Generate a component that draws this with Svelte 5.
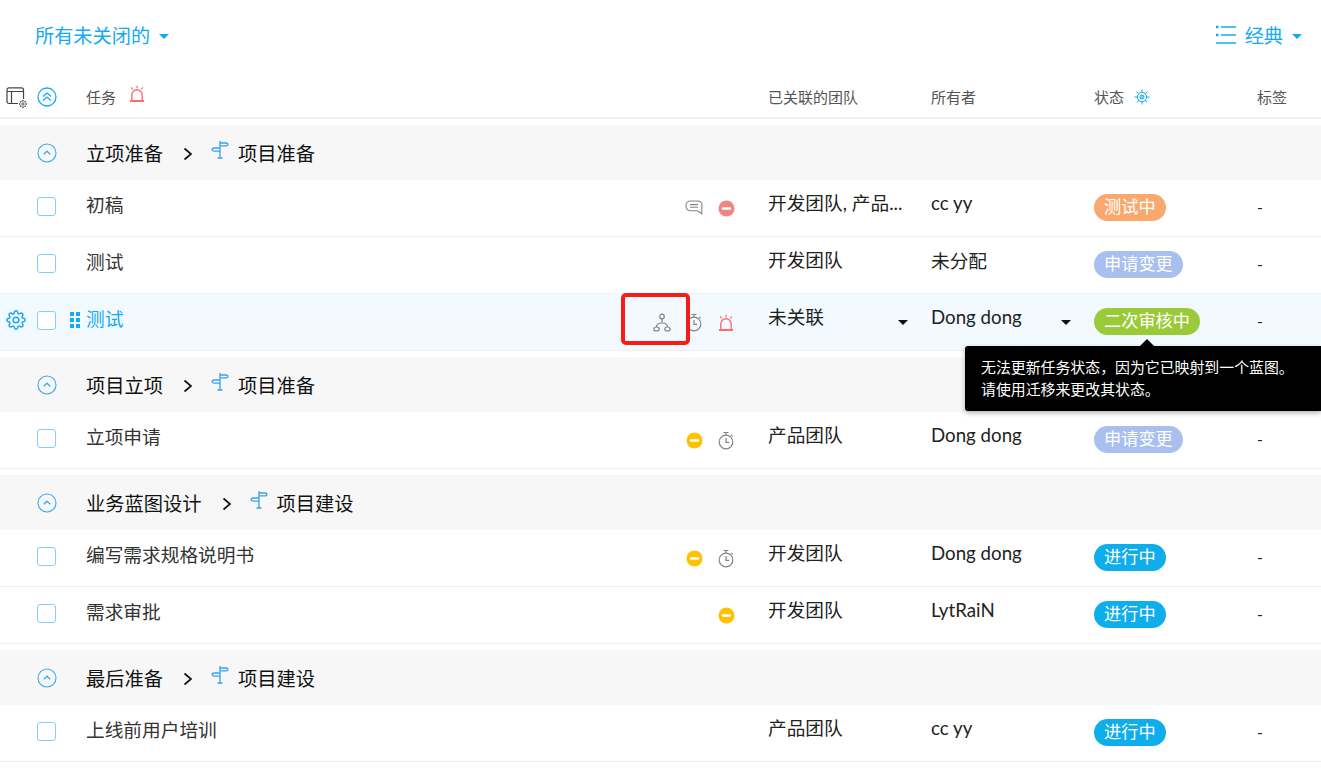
<script lang="ts">
  type Row = {
    name: string;
    team: string;
    owner: string;
    status: string;
    tone: string;
    icons: string[];
    active?: boolean;
  };
  type Group = { name: string; stage: string; rows: Row[] };

  const groups: Group[] = [
    {
      name: '立项准备',
      stage: '项目准备',
      rows: [
        { name: '初稿', team: '开发团队, 产品...', owner: 'cc yy', status: '测试中', tone: 'orange', icons: ['comment', 'blocked'] },
        { name: '测试', team: '开发团队', owner: '未分配', status: '申请变更', tone: 'lilac', icons: [] },
        { name: '测试', team: '未关联', owner: 'Dong dong', status: '二次审核中', tone: 'green', icons: ['network', 'timer', 'alarm'], active: true },
      ],
    },
    {
      name: '项目立项',
      stage: '项目准备',
      rows: [{ name: '立项申请', team: '产品团队', owner: 'Dong dong', status: '申请变更', tone: 'lilac', icons: ['pending', 'timer'] }],
    },
    {
      name: '业务蓝图设计',
      stage: '项目建设',
      rows: [
        { name: '编写需求规格说明书', team: '开发团队', owner: 'Dong dong', status: '进行中', tone: 'blue', icons: ['pending', 'timer'] },
        { name: '需求审批', team: '开发团队', owner: 'LytRaiN', status: '进行中', tone: 'blue', icons: ['pending'] },
      ],
    },
    {
      name: '最后准备',
      stage: '项目建设',
      rows: [{ name: '上线前用户培训', team: '产品团队', owner: 'cc yy', status: '进行中', tone: 'blue', icons: [] }],
    },
  ];

  const gearPath =
    'M19.4 15a1.65 1.65 0 0 0 .33 1.82l.06.06a2 2 0 0 1 0 2.83 2 2 0 0 1-2.83 0l-.06-.06a1.65 1.65 0 0 0-1.82-.33 1.65 1.65 0 0 0-1 1.51V21a2 2 0 0 1-2 2 2 2 0 0 1-2-2v-.09A1.65 1.65 0 0 0 9 19.4a1.65 1.65 0 0 0-1.82.33l-.06.06a2 2 0 0 1-2.83 0 2 2 0 0 1 0-2.83l.06-.06a1.65 1.65 0 0 0 .33-1.82 1.65 1.65 0 0 0-1.51-1H3a2 2 0 0 1-2-2 2 2 0 0 1 2-2h.09A1.65 1.65 0 0 0 4.6 9a1.65 1.65 0 0 0-.33-1.82l-.06-.06a2 2 0 0 1 0-2.83 2 2 0 0 1 2.83 0l.06.06a1.65 1.65 0 0 0 1.82.33H9a1.65 1.65 0 0 0 1-1.51V3a2 2 0 0 1 2-2 2 2 0 0 1 2 2v.09a1.65 1.65 0 0 0 1 1.51 1.65 1.65 0 0 0 1.82-.33l.06-.06a2 2 0 0 1 2.83 0 2 2 0 0 1 0 2.83l-.06.06a1.65 1.65 0 0 0-.33 1.82V9a1.65 1.65 0 0 0 1.51 1H21a2 2 0 0 1 2 2 2 2 0 0 1-2 2h-.09a1.65 1.65 0 0 0-1.51 1z';
</script>

{#snippet gear(size: number, width: number)}
  <svg width={size} height={size} viewBox="0 0 24 24" fill="none" stroke="currentColor" stroke-width={width}>
    <circle cx="12" cy="12" r="3.4" />
    <path d={gearPath} />
  </svg>
{/snippet}

{#snippet alarm()}
  <svg class="alarm" width="18" height="18" viewBox="0 0 18 18" fill="none" stroke="currentColor" stroke-width="1.4">
    <path d="M3.800 15.500V9.900a5.200 5.200 0 0 1 10.400 0v5.600" />
    <path d="M2 16h14" stroke-width="2" />
    <path d="M9 .8v2.500M3.200 2.400l1.500 2M14.800 2.400l-1.500 2" stroke-width="1.200" />
  </svg>
{/snippet}

{#snippet signpost()}
  <svg class="signpost" width="20" height="20" viewBox="0 0 20 20" fill="none" stroke="currentColor" stroke-width="1.3">
    <path d="M10 1v17M7.500 18h5" />
    <path d="M10 3h6c1.400 0 2 .8 2 1.400 0 .7-.6 1.400-2 1.400h-6" />
    <path d="M10 8H4.400C3 8 2.200 9 2.200 9.600c0 .7.8 1.500 2.200 1.500H10" />
  </svg>
{/snippet}

{#snippet statusIcon(name: string)}
  {#if name === 'comment'}
    <svg class="grey" width="18" height="17" viewBox="0 0 18 17" fill="none" stroke="currentColor" stroke-width="1.100">
      <path d="M5.500 1h7c2.800 0 4.500 1.600 4.500 4.200 0 1.800-.3 5-.3 8.800-1.200-1.300-2.600-2.500-4.400-3.200H5.500C2.700 10.800 1 8.500 1 5.800 1 2.800 2.700 1 5.500 1z" />
      <path d="M5 4.600h8M5 7.200h8" />
    </svg>
  {:else if name === 'blocked' || name === 'pending'}
    <svg width="17" height="17" viewBox="0 0 17 17">
      <circle cx="8.500" cy="8.500" r="8" fill={name === 'blocked' ? '#ee8683' : '#fcc305'} />
      <path d="M5 8.500h7" stroke="#fff" stroke-width="2.400" stroke-linecap="round" />
    </svg>
  {:else if name === 'network'}
    <svg class="grey" width="18" height="20" viewBox="0 0 18 20" fill="none" stroke="currentColor" stroke-width="1.200">
      <circle cx="9" cy="3.500" r="2.300" />
      <ellipse cx="3.500" cy="16" rx="2.700" ry="2" />
      <ellipse cx="14.500" cy="16" rx="2.700" ry="2" />
      <path d="M9 5.800V10M3.500 14c0-2.600 2.500-4 5.500-4s5.500 1.400 5.500 4" />
    </svg>
  {:else if name === 'timer'}
    <svg class="grey" width="18" height="19" viewBox="0 0 18 19" fill="none" stroke="currentColor" stroke-width="1.200">
      <circle cx="9" cy="11" r="6.800" />
      <path d="M6.500 1.500h5M9 1.500v2.700M14 3.800l1.600 1.600M9 7v4.300h3.200" />
    </svg>
  {:else if name === 'alarm'}
    {@render alarm()}
  {/if}
{/snippet}

<div class="page">
  <header class="topbar">
    <button class="view-switch" type="button">所有未关闭的<span class="caret"></span></button>
    <button class="view-switch layout-switch" type="button">
      <svg width="20" height="20" viewBox="0 0 20 20" fill="none" stroke="currentColor" stroke-width="1.600">
        <path d="M5 2h15M5 10h15M0 18h20" />
        <path d="M0 2h2.500M0 10h2.500" stroke-width="2.400" />
      </svg>
      <span>经典</span><span class="caret"></span>
    </button>
  </header>

  <div class="grid head">
    <div class="table-setting">
      <svg width="20" height="18" viewBox="0 0 20 18" fill="none" stroke="#444" stroke-width="1.200">
        <path d="M12 16.500H3a2 2 0 0 1-2-2V2.800a2 2 0 0 1 2-2h12.500a2 2 0 0 1 2 2V12" />
        <path d="M1 4.500h16.500M5.500 4.500v12" />
      </svg>
      <span class="mini-gear">{@render gear(8, 3)}</span>
    </div>
    <div class="toggle">
      <svg width="20" height="20" viewBox="0 0 20 20" fill="none" stroke="#14a9f5" stroke-width="1.300">
        <circle cx="10" cy="10" r="9" />
        <path d="M6 9.500l4-3.500 4 3.500M6 13.500l4-3.500 4 3.500" />
      </svg>
    </div>
    <div class="th task-head">任务 {@render alarm()}</div>
    <div class="th">已关联的团队</div>
    <div class="th">所有者</div>
    <div class="th status-head">
      状态
      <svg class="status-gear" width="16" height="16" viewBox="0 0 16 16" fill="none" stroke="currentColor" stroke-width="1">
        <circle cx="8" cy="8" r="4.600" />
        <circle cx="8" cy="8" r="2" fill="currentColor" fill-opacity="0.5" />
        <path d="M8 .5v3M8 12.500v3M.5 8h3M12.500 8h3M2.700 2.700l2.100 2.100M11.200 11.200l2.100 2.100M13.300 2.700l-2.100 2.100M4.800 11.200l-2.100 2.100" />
      </svg>
    </div>
    <div class="th">标签</div>
  </div>

  {#each groups as group}
    <section class="group">
      <div class="grid group-title">
        <div></div>
        <div class="toggle">
          <svg width="20" height="20" viewBox="0 0 20 20" fill="none" stroke="#3aa9f0" stroke-width="1.100">
            <circle cx="10" cy="10" r="9" />
            <path d="M6.800 11.200L10 8.200l3.200 3" stroke-width="1.300" />
          </svg>
        </div>
        <div class="crumbs">
          <span>{group.name}</span>
          <svg class="sep" width="10" height="14" viewBox="0 0 10 14" fill="none" stroke="#111" stroke-width="1.700">
            <path d="M1.500 1.500L8 7l-6.500 5.500" />
          </svg>
          {@render signpost()}
          <span>{group.stage}</span>
        </div>
      </div>

      {#each group.rows as row}
        <div class="grid row" class:active={row.active}>
          <div class="row-gear">
            {#if row.active}{@render gear(20, 1.800)}{/if}
          </div>
          <div class="select">
            <span class="checkbox"></span>
            {#if row.active}
              <span class="handle">
                {#each Array(6) as _}<i></i>{/each}
              </span>
            {/if}
          </div>
          <div class="task">
            <span class="task-name">{row.name}</span>
            <div class="task-icons">
              {#each row.icons as icon}
                <span class="slot">{@render statusIcon(icon)}</span>
              {/each}
            </div>
          </div>
          <div class="cell team">
            <span class="clip">{row.team}</span>
            {#if row.active}<span class="caret dark"></span>{/if}
          </div>
          <div class="cell owner">
            <span class="clip">{row.owner}</span>
            {#if row.active}<span class="caret dark"></span>{/if}
          </div>
          <div class="cell status">
            <span class="badge {row.tone}">{row.status}</span>
          </div>
          <div class="cell tag">-</div>
        </div>
      {/each}
    </section>
  {/each}

  <!-- annotation over the third row -->
  <div class="highlight"></div>

  <div class="tooltip">
    <p>无法更新任务状态，因为它已映射到一个蓝图。</p>
    <p>请使用迁移来更改其状态。</p>
  </div>
</div>

<style>
  :global(body) {
    margin: 0;
    background: #fff;
    overflow: hidden;
  }

  .page {
    position: relative;
    height: 769px;
    overflow: hidden;
    font-family: Lato, "Noto Sans CJK SC", sans-serif;
    font-size: 18.7px;
    color: #222;
  }

  .topbar {
    height: 76px;
    display: flex;
    align-items: center;
    justify-content: space-between;
    padding: 0 19px 6px 35px;
    box-sizing: border-box;
    font-size: 19.2px;
  }

  .view-switch {
    display: flex;
    align-items: center;
    padding: 0;
    border: none;
    background: none;
    color: #14a9f5;
    font: inherit;
    cursor: pointer;
  }

  .layout-switch svg {
    margin-right: 9px;
  }

  .caret {
    display: inline-block;
    width: 0;
    height: 0;
    margin-left: 9px;
    margin-top: 3px;
    border-left: 5px solid transparent;
    border-right: 5px solid transparent;
    border-top: 5px solid #14a9f5;
  }

  .caret.dark {
    position: absolute;
    right: 23px;
    top: 50%;
    margin: 0;
    border-top-color: #111;
  }

  .grid {
    display: grid;
    grid-template-columns: 37px 49px 682px 163px 163px 163px 64px;
    align-items: center;
  }

  .head {
    height: 41px;
    border-bottom: 2px solid #f0f0f0;
  }

  .table-setting {
    position: relative;
    display: flex;
    padding-left: 6px;
    height: 18px;
    margin-top: -2px;
  }

  .mini-gear {
    position: absolute;
    left: 19px;
    top: 13px;
    display: flex;
    color: #555;
  }

  .toggle {
    display: flex;
    align-items: center;
  }

  .th {
    display: flex;
    align-items: center;
    font-size: 15px;
    color: #555;
  }

  .task-head :global(.alarm) {
    margin: -6px 0 0 12px;
  }

  .status-gear {
    margin-left: 10px;
    color: #14a9f5;
  }

  .group {
    margin-top: 6px;
  }

  .group-title {
    height: 55px;
    background: #f7f7f7;
    font-size: 19.25px;
  }

  .crumbs {
    display: flex;
    align-items: center;
    color: #111;
  }

  .sep {
    margin: 2px 17px 0 20px;
  }

  .signpost {
    color: #3aa0ee;
    margin: -6px 8px 0 0;
  }

  .row {
    height: 52px;
    padding-bottom: 4px;
    border-bottom: 1px solid #f0f0f0;
  }

  .row.active {
    background: #f2faff;
  }

  .row-gear {
    display: flex;
    padding-left: 6px;
    color: #14a9f5;
  }

  .select {
    display: flex;
    align-items: center;
    gap: 14px;
  }

  .checkbox {
    width: 17px;
    height: 17px;
    border: 1px solid #86cdf8;
    border-radius: 3px;
    background: #fff;
  }

  .handle {
    display: grid;
    grid-template-columns: 4px 4px;
    gap: 2px;
  }

  .handle i {
    width: 4px;
    height: 4px;
    background: #14a9f5;
  }

  .task {
    display: flex;
    align-items: center;
    justify-content: space-between;
    padding-right: 26px;
  }

  .task-name {
    padding-bottom: 5px;
    color: #333;
  }

  .active .task-name {
    color: #14a9f5;
  }

  .task-icons {
    display: flex;
  }

  .slot {
    width: 32px;
    display: flex;
    justify-content: center;
    align-items: center;
    margin-top: 5px;
  }

  .slot :global(.grey) {
    color: #808488;
  }

  .slot :global(.alarm),
  .task-head :global(.alarm) {
    color: #ff6a6e;
  }

  .cell {
    position: relative;
    display: flex;
    align-items: center;
    height: 100%;
    box-sizing: border-box;
  }

  .cell.team {
    padding-bottom: 10px;
  }

  .cell.owner {
    padding-bottom: 7px;
  }

  .cell.status {
    padding-top: 2px;
  }

  .clip {
    white-space: nowrap;
  }

  .badge {
    display: inline-block;
    height: 27px;
    line-height: 26px;
    padding: 0 10px;
    border-radius: 14px;
    color: #fff;
    font-size: 17.2px;
  }

  .badge.orange { background: #f9a96e; }
  .badge.lilac { background: #a9bfee; }
  .badge.green { background: #99cb38; }
  .badge.blue { background: #0eaeea; }

  .tag {
    font-size: 16px;
  }

  .highlight {
    position: absolute;
    left: 621px;
    top: 293px;
    width: 61px;
    height: 44px;
    border: 4px solid #f91c15;
    border-radius: 5px;
  }

  .tooltip {
    position: absolute;
    left: 965px;
    right: 0;
    top: 346px;
    height: 65px;
    box-sizing: border-box;
    padding: 11px 16px;
    background: #000;
    border-radius: 3px 0 0 3px;
    box-shadow: 0 2px 5px rgba(0, 0, 0, 0.3);
    color: #fff;
    font-size: 14.9px;
    line-height: 21.5px;
  }

  .tooltip::before {
    content: '';
    position: absolute;
    left: 175px;
    top: -7px;
    border-left: 7px solid transparent;
    border-right: 7px solid transparent;
    border-bottom: 7px solid #000;
  }

  .tooltip p {
    margin: 0;
    white-space: nowrap;
  }
</style>
